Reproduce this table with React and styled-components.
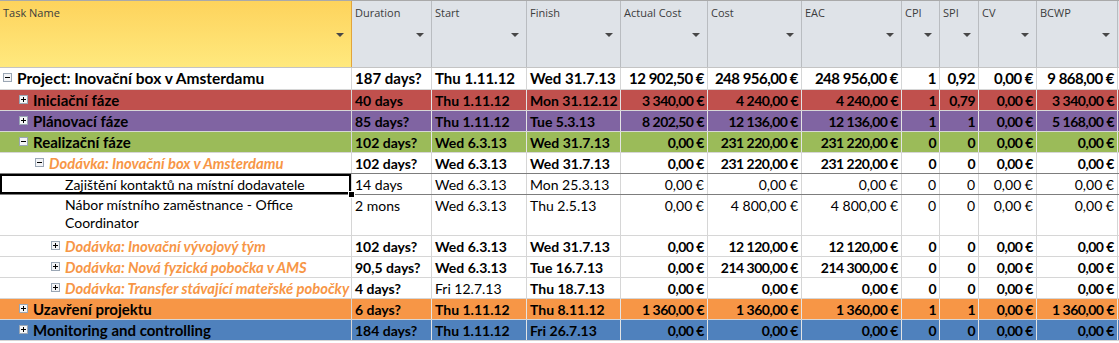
import styled, { createGlobalStyle } from "styled-components";

const GlobalStyle = createGlobalStyle`
  body {
    margin: 0;
    background: #ffffff;
    font-family: Lato, "Open Sans", sans-serif;
  }
`;

const COLS = "352px 80px 95px 94px 87px 94px 100px 38px 39px 58px 81px";

const ROW_COLORS = {
  red: "#c0504d",
  purple: "#8064a2",
  green: "#9bbb59",
  orange: "#f79646",
  blue: "#4f81bd",
};

const Sheet = styled.div`
  width: 1119px;
  overflow: hidden;
  color: #000;
`;

const HeaderRow = styled.div`
  display: grid;
  grid-template-columns: ${COLS};
  height: 66px;
  border-top: 1px solid #a9a9a9;
  border-bottom: 1px solid #c4c4c4;
  background: #dfe3e8;
`;

const HeaderCell = styled.div`
  position: relative;
  padding: 4px 3px;
  font-family: "Open Sans", "DejaVu Sans", sans-serif;
  font-size: 11px;
  color: #3c3c3c;
  border-right: 1px solid ${(p) => (p.$active ? "#e2a43c" : "#b9bcc0")};
  background: ${(p) =>
    p.$active ? "linear-gradient(#fdd35c, #ffe97e)" : "transparent"};
`;

const DropArrow = styled.span`
  position: absolute;
  right: 7px;
  top: 32px;
  width: 0;
  height: 0;
  border-left: 4px solid transparent;
  border-right: 4px solid transparent;
  border-top: 4px solid #474747;
`;

const Row = styled.div`
  display: grid;
  grid-template-columns: ${COLS};
  height: ${(p) => p.$height}px;
  background: ${(p) => (p.$color ? ROW_COLORS[p.$color] : "#ffffff")};
  border-bottom: 1px solid ${(p) => (p.$selected ? "#7d7d7d" : "#d6d6d6")};
  margin-top: ${(p) => (p.$selected ? "-1px" : "0")};
  border-top: ${(p) => (p.$selected ? "1px solid #7d7d7d" : "none")};
  font-size: ${(p) => (p.$big ? "15px" : "14px")};
  font-weight: ${(p) => (p.$bold ? 700 : 400)};
`;

const Cell = styled.div`
  position: relative;
  padding: 1px 3px 0;
  line-height: 19px;
  white-space: nowrap;
  overflow: hidden;
  text-align: ${(p) => (p.$right ? "right" : "left")};
  border-right: 1px solid ${(p) => (p.$color ? "#e4e4e4" : "#d6d6d6")};
  font-weight: ${(p) => (p.$regular ? 400 : "inherit")};
  letter-spacing: ${(p) => (p.$tight ? "-0.5px" : "normal")};
`;

const TaskCell = styled.div`
  position: relative;
  display: flex;
  align-items: flex-start;
  padding: 1px 3px 0 ${(p) => 3 + p.$level * 16}px;
  line-height: ${(p) => (p.$wrap ? "18px" : "19px")};
  border-right: 1px solid #d6d6d6;
  box-shadow: ${(p) => (p.$selected ? "inset 0 0 0 2px #000" : "none")};
`;

const Toggle = styled.svg`
  flex: none;
  width: 9px;
  height: 9px;
  margin-top: 4px;
  margin-right: 5px;
`;

const TASK_SIZES = ["15.5px", "15px", "14.8px", "14.8px"];

const TaskName = styled.span`
  padding-left: ${(p) => (p.$leaf ? "14px" : "0")};
  white-space: ${(p) => (p.$wrap ? "normal" : "nowrap")};
  font-size: ${(p) => (p.$leaf ? "14px" : TASK_SIZES[p.$level])};
  font-style: ${(p) => (p.$deliverable ? "italic" : "normal")};
  color: ${(p) => (p.$deliverable ? "#f79646" : "#000")};
`;

const FillHandle = styled.span`
  position: absolute;
  right: -4px;
  bottom: -4px;
  width: 5px;
  height: 5px;
  background: #000;
  border: 1px solid #fff;
  z-index: 2;
`;

function ToggleIcon({ open }) {
  return (
    <Toggle viewBox="0 0 9 9">
      <rect x="0.5" y="0.5" width="8" height="8" fill="#f3f4f6" stroke="#9aa6b4" />
      <path d="M2 4.5h5" stroke="#000" strokeWidth="1" />
      {!open && <path d="M4.5 2v5" stroke="#000" strokeWidth="1" />}
    </Toggle>
  );
}

const headers = [
  "Task Name",
  "Duration",
  "Start",
  "Finish",
  "Actual Cost",
  "Cost",
  "EAC",
  "CPI",
  "SPI",
  "CV",
  "BCWP",
];

const tasks = [
  {
    name: "Project: Inovační box v Amsterdamu",
    level: 0,
    toggle: "open",
    big: true,
    bold: true,
    height: 21,
    values: ["187 days?", "Thu 1.11.12", "Wed 31.7.13", "12 902,50 €", "248 956,00 €", "248 956,00 €", "1", "0,92", "0,00 €", "9 868,00 €"],
  },
  {
    name: "Iniciační fáze",
    level: 1,
    toggle: "closed",
    color: "red",
    bold: true,
    values: ["40 days", "Thu 1.11.12", "Mon 31.12.12", "3 340,00 €", "4 240,00 €", "4 240,00 €", "1", "0,79", "0,00 €", "3 340,00 €"],
  },
  {
    name: "Plánovací fáze",
    level: 1,
    toggle: "closed",
    color: "purple",
    bold: true,
    values: ["85 days?", "Thu 1.11.12", "Tue 5.3.13", "8 202,50 €", "12 136,00 €", "12 136,00 €", "1", "1", "0,00 €", "5 168,00 €"],
  },
  {
    name: "Realizační fáze",
    level: 1,
    toggle: "open",
    color: "green",
    bold: true,
    values: ["102 days?", "Wed 6.3.13", "Wed 31.7.13", "0,00 €", "231 220,00 €", "231 220,00 €", "0", "0", "0,00 €", "0,00 €"],
  },
  {
    name: "Dodávka: Inovační box v Amsterdamu",
    level: 2,
    toggle: "open",
    deliverable: true,
    bold: true,
    values: ["102 days?", "Wed 6.3.13", "Wed 31.7.13", "0,00 €", "231 220,00 €", "231 220,00 €", "0", "0", "0,00 €", "0,00 €"],
  },
  {
    name: "Zajištění kontaktů na místní dodavatele",
    level: 3,
    selected: true,
    values: ["14 days", "Wed 6.3.13", "Mon 25.3.13", "0,00 €", "0,00 €", "0,00 €", "0", "0", "0,00 €", "0,00 €"],
  },
  {
    name: "Nábor místního zaměstnance - Office Coordinator",
    level: 3,
    wrap: true,
    height: 40,
    values: ["2 mons", "Wed 6.3.13", "Thu 2.5.13", "0,00 €", "4 800,00 €", "4 800,00 €", "0", "0", "0,00 €", "0,00 €"],
  },
  {
    name: "Dodávka: Inovační vývojový tým",
    level: 3,
    toggle: "closed",
    deliverable: true,
    bold: true,
    values: ["102 days?", "Wed 6.3.13", "Wed 31.7.13", "0,00 €", "12 120,00 €", "12 120,00 €", "0", "0", "0,00 €", "0,00 €"],
  },
  {
    name: "Dodávka: Nová fyzická pobočka v AMS",
    level: 3,
    toggle: "closed",
    deliverable: true,
    bold: true,
    values: ["90,5 days?", "Wed 6.3.13", "Tue 16.7.13", "0,00 €", "214 300,00 €", "214 300,00 €", "0", "0", "0,00 €", "0,00 €"],
  },
  {
    name: "Dodávka: Transfer stávající mateřské pobočky",
    level: 3,
    toggle: "closed",
    deliverable: true,
    bold: true,
    regularStart: true,
    values: ["4 days?", "Fri 12.7.13", "Thu 18.7.13", "0,00 €", "0,00 €", "0,00 €", "0", "0", "0,00 €", "0,00 €"],
  },
  {
    name: "Uzavření projektu",
    level: 1,
    toggle: "closed",
    color: "orange",
    bold: true,
    values: ["6 days?", "Thu 1.11.12", "Thu 8.11.12", "1 360,00 €", "1 360,00 €", "1 360,00 €", "1", "1", "0,00 €", "1 360,00 €"],
  },
  {
    name: "Monitoring and controlling",
    level: 1,
    toggle: "closed",
    color: "blue",
    bold: true,
    values: ["184 days?", "Thu 1.11.12", "Fri 26.7.13", "0,00 €", "0,00 €", "0,00 €", "0", "0", "0,00 €", "0,00 €"],
  },
];

function TaskRow({ task }) {
  return (
    <Row
      $height={task.height || 20}
      $color={task.color}
      $bold={task.bold}
      $big={task.big}
      $selected={task.selected}
    >
      <TaskCell $level={task.level} $wrap={task.wrap} $selected={task.selected}>
        {task.toggle && <ToggleIcon open={task.toggle === "open"} />}
        <TaskName
          $leaf={!task.toggle}
          $level={task.level}
          $wrap={task.wrap}
          $deliverable={task.deliverable}
        >
          {task.name}
        </TaskName>
        {task.selected && <FillHandle />}
      </TaskCell>
      {task.values.map((v, i) => (
        <Cell
          key={i}
          $right={i > 2}
          $color={task.color}
          $tight={i > 2 && task.bold}
          $regular={i === 1 && task.regularStart}
        >
          {v}
        </Cell>
      ))}
    </Row>
  );
}

export default function App() {
  return (
    <Sheet>
      <GlobalStyle />
      <HeaderRow>
        {headers.map((h, i) => (
          <HeaderCell key={h} $active={i === 0}>
            {h}
            <DropArrow />
          </HeaderCell>
        ))}
      </HeaderRow>
      {tasks.map((t) => (
        <TaskRow key={t.name} task={t} />
      ))}
    </Sheet>
  );
}
